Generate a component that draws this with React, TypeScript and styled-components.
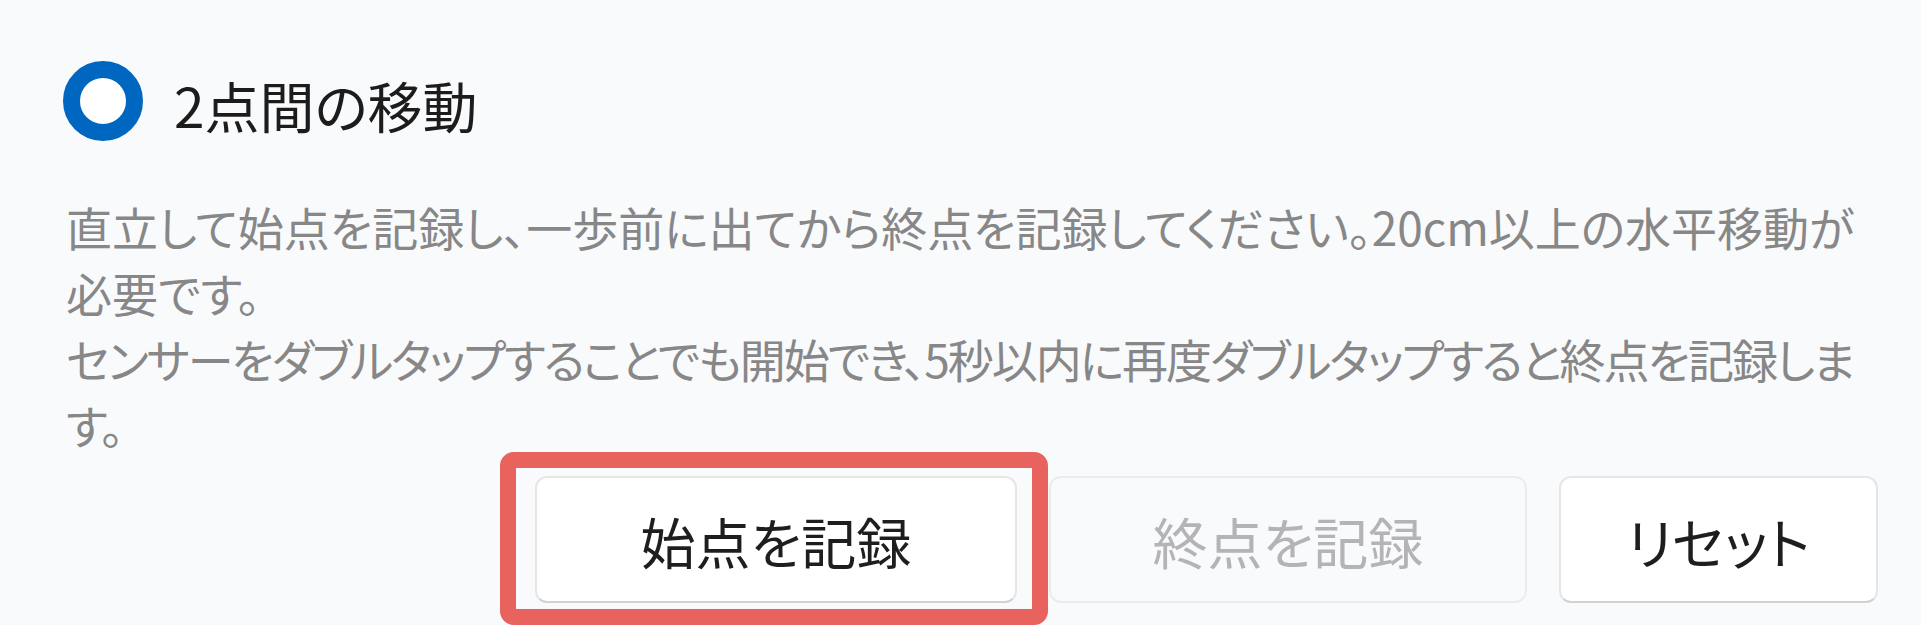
import React, { FC } from "react";
import styled, { createGlobalStyle } from "styled-components";

const GlobalStyle = createGlobalStyle`
  html, body {
    margin: 0;
    padding: 0;
    background: #f9fafc;
  }
  body {
    font-family: "Noto Sans CJK JP", "Noto Sans", sans-serif;
  }
`;

const Card = styled.div`
  display: flex;
  flex-direction: column;
  width: 1921px;
  height: 625px;
  box-sizing: border-box;
  padding: 60px 43px 0 63px;
  background: #f9fafc;
  overflow: hidden;
`;

const Header = styled.div`
  display: flex;
  align-items: center;
  gap: 31px;
  height: 82px;
`;

const Radio = styled.span`
  display: inline-block;
  width: 80px;
  height: 80px;
  box-sizing: border-box;
  border-radius: 50%;
  border: 17px solid #0067c0;
  background: #ffffff;
  flex-shrink: 0;
`;

const Title = styled.div`
  font-size: 55px;
  line-height: 1.3;
  color: #1c1c1c;
  font-feature-settings: "palt";
  margin-top: 8px;
`;

const Description = styled.div`
  margin-top: 51px;
  padding-left: 3px;
  max-width: 1804px;
  font-size: 46px;
  line-height: 66px;
  color: #878787;
  font-feature-settings: "palt";
`;

const Paragraph = styled.p<{ $tight?: boolean }>`
  margin: 0;
  letter-spacing: ${(p) => (p.$tight ? "-2px" : "0")};
`;

const Actions = styled.div`
  display: flex;
  justify-content: flex-end;
  align-items: center;
  gap: 32px;
  margin-top: 19px;
`;

const Highlight = styled.span`
  position: relative;
  display: inline-flex;

  &::after {
    content: "";
    position: absolute;
    top: -24px;
    left: -35px;
    right: -31px;
    bottom: -22px;
    border: 16px solid #e8635d;
    border-radius: 14px;
    pointer-events: none;
  }
`;

const Button = styled.button<{ $width: number }>`
  width: ${(p) => p.$width}px;
  height: 127px;
  box-sizing: border-box;
  border-radius: 12px;
  border: 2px solid #e6e6e6;
  border-bottom-color: #d2d2d2;
  background: #ffffff;
  color: #1e1e1e;
  font-family: "Noto Sans CJK JP", "Noto Sans", sans-serif;
  font-size: 55px;
  font-feature-settings: "palt";
  padding: 0;
  cursor: pointer;

  &:disabled {
    background: #f9fafc;
    border-color: #ececee;
    color: #b4b4b6;
    cursor: default;
  }
`;

const App: FC = () => {
  return (
    <>
      <GlobalStyle />
      <Card>
        <Header>
          <Radio />
          <Title>2点間の移動</Title>
        </Header>
        <Description>
          <Paragraph>
            直立して始点を記録し、一歩前に出てから終点を記録してください。20cm以上の水平移動が必要です。
          </Paragraph>
          <Paragraph $tight>
            センサーをダブルタップすることでも開始でき、5秒以内に再度ダブルタップすると終点を記録します。
          </Paragraph>
        </Description>
        <Actions>
          <Highlight>
            <Button $width={482}>始点を記録</Button>
          </Highlight>
          <Button $width={478} disabled>
            終点を記録
          </Button>
          <Button $width={319}>リセット</Button>
        </Actions>
      </Card>
    </>
  );
};

export default App;
